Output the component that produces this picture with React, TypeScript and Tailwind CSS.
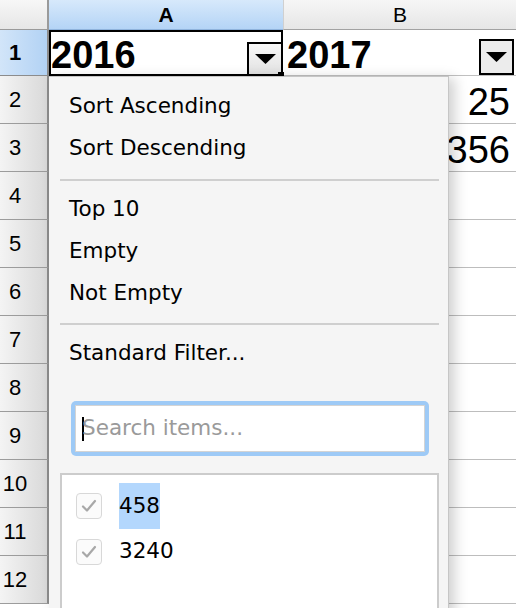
import React from "react";

const rows = [
  { n: 2, b: "25" },
  { n: 3, b: "356" },
  { n: 4, b: "" },
  { n: 5, b: "" },
  { n: 6, b: "" },
  { n: 7, b: "" },
  { n: 8, b: "" },
  { n: 9, b: "" },
  { n: 10, b: "" },
  { n: 11, b: "" },
  { n: 12, b: "" },
];

const Arrow = () => (
  <svg width="21" height="10" viewBox="0 0 21 10">
    <polygon points="0,0 21,0 10.5,10" fill="#000" />
  </svg>
);

const Check = () => (
  <div className="w-[26px] h-[26px] rounded-[4px] border border-[#d8d8d8] bg-[#fbfbfb] flex items-center justify-center">
    <svg width="16" height="14" viewBox="0 0 16 14">
      <polyline
        points="2,7.5 6,11.5 14,2"
        fill="none"
        stroke="#a8a8a8"
        strokeWidth="2.2"
        strokeLinecap="round"
        strokeLinejoin="round"
      />
    </svg>
  </div>
);

const menuItem = "h-[42px] flex items-center pl-[20px]";

const FilterPopup = () => (
  <div
    className="absolute left-[49px] top-[76px] w-[400px] h-[540px] bg-[#f5f5f5] border-t border-r border-[#c6c6c6] shadow-[6px_2px_12px_rgba(0,0,0,0.18)] text-[21.5px] text-black"
    style={{ fontFamily: '"DejaVu Sans", sans-serif' }}
  >
    <div className="pt-[8px]">
      <div className={menuItem}>Sort Ascending</div>
      <div className={menuItem}>Sort Descending</div>
    </div>
    <div className="mt-[10px] ml-[11px] mr-[9px] h-[2px] bg-[#cfcfcf]" />
    <div className="mt-[7px]">
      <div className={menuItem}>Top 10</div>
      <div className={menuItem}>Empty</div>
      <div className={menuItem}>Not Empty</div>
    </div>
    <div className="mt-[9px] ml-[11px] mr-[9px] h-[2px] bg-[#cfcfcf]" />
    <div className={`mt-[7px] ${menuItem}`}>Standard Filter...</div>
    <div className="mt-[27px] ml-[22px] w-[358px] h-[55px] rounded-[5px] bg-[#9ecaf6] p-[4px]">
      <div className="h-full bg-white border border-[#d4d4d4] flex items-center pl-[6px]">
        <span className="w-[2px] h-[24px] bg-black -mr-[2px]" />
        <span className="text-[#9a9a9a]">Search items...</span>
      </div>
    </div>
    <div className="mt-[17px] ml-[11px] w-[379px] h-[200px] bg-white border-2 border-[#cccccc] pt-[8px] pl-[14px]">
      <div className="h-[46px] flex items-center gap-[17px]">
        <Check />
        <span className="h-full flex items-center bg-[#b3d7fd]">458</span>
      </div>
      <div className="h-[45px] flex items-center gap-[17px]">
        <Check />
        <span>3240</span>
      </div>
    </div>
  </div>
);

export default function App() {
  return (
    <div
      className="relative w-[516px] h-[608px] overflow-hidden bg-white text-black"
      style={{ fontFamily: '"Liberation Sans", Arial, sans-serif' }}
    >
      <div className="flex h-[30px]">
        <div className="w-[49px] border-r-2 border-b border-[#9a9a9a] bg-gradient-to-b from-[#f7f7f7] to-[#e6e6e6]" />
        <div className="w-[234px] border-b border-[#8fb3dc] bg-gradient-to-b from-[#d7e9fb] to-[#b4d4f6] flex items-center justify-center text-[21px] font-bold">
          A
        </div>
        <div className="flex-1 border-b border-[#a2a2a2] border-l border-l-[#d0d0d0] bg-gradient-to-b from-[#f6f6f6] to-[#e6e6e6] flex items-center justify-center text-[21px]">
          B
        </div>
      </div>

      <div className="flex h-[46px]">
        <div className="w-[49px] border-r-2 border-b border-[#8c8c8c] bg-gradient-to-r from-[#d2e5f9] to-[#b2d2f4] flex items-center">
          <span className="w-[30px] text-center text-[22px] font-bold">1</span>
        </div>
        <div className="relative w-[234px] border-2 border-black flex">
          <span className="self-center pt-[4px] text-[38px] font-bold leading-none">2016</span>
          <div className="ml-auto self-end w-[34px] h-[32px] border-l-2 border-t-2 border-black bg-gradient-to-b from-[#f8f8f8] to-[#e2e2e2] flex items-center justify-center">
            <Arrow />
          </div>
          <div className="absolute -right-[3px] -bottom-[3px] w-[6px] h-[5px] bg-black" />
        </div>
        <div className="flex-1 flex border-b border-[#c0c0c0]">
          <span className="self-center pt-[4px] pl-[4px] text-[38px] font-bold leading-none">2017</span>
          <div className="ml-auto mr-[2px] self-end w-[35px] h-[36px] border-2 border-black bg-[#ececec] flex items-center justify-center">
            <Arrow />
          </div>
        </div>
      </div>

      {rows.map((r) => (
        <div key={r.n} className="flex h-[48px]">
          <div className="w-[49px] border-r-2 border-b border-[#8c8c8c] border-b-[#9c9c9c] bg-gradient-to-r from-[#f4f4f4] to-[#d9d9d9] flex items-center">
            <span className="w-[30px] text-center text-[22px]">{r.n}</span>
          </div>
          <div className="w-[234px] border-b border-[#c0c0c0]" />
          <div className="flex-1 border-b border-[#bdbdbd] flex items-center justify-end pr-[6px] pt-[5px] text-[38px] leading-none">
            {r.b}
          </div>
        </div>
      ))}

      <FilterPopup />
    </div>
  );
}
